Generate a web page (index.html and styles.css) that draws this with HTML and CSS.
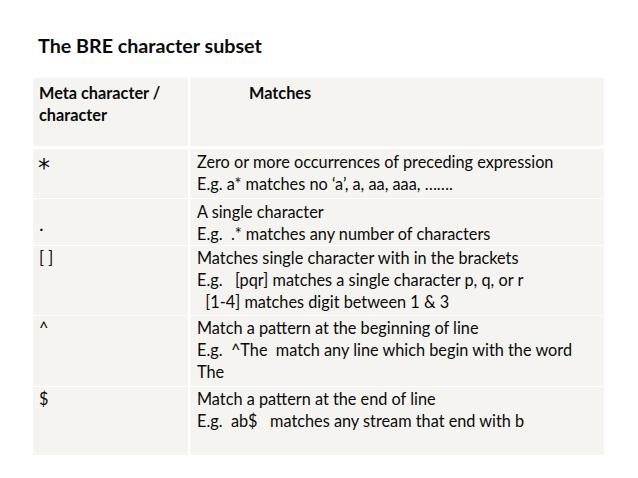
FILE: index.html
```html
<!DOCTYPE html>
<html>
<head>
<meta charset="utf-8">
<link rel="stylesheet" href="styles.css">
</head>
<body>
<div class="slide">
  <h1 class="title">The BRE character subset</h1>
  <div class="table">
    <div class="row head">
      <div class="cell c1">Meta character /<br>character</div>
      <div class="cell c2 head-matches">Matches</div>
    </div>
    <div class="row r1">
      <div class="cell c1 meta star">*</div>
      <div class="cell c2">Zero or more occurrences of preceding expression
E.g. a* matches no ‘a’, a, aa, aaa, …….</div>
    </div>
    <div class="row r2">
      <div class="cell c1 meta big mid">.</div>
      <div class="cell c2">A single character
E.g.  .* matches any number of characters</div>
    </div>
    <div class="row r3">
      <div class="cell c1 meta">[ ]</div>
      <div class="cell c2">Matches single character with in the brackets
E.g.   [pqr] matches a single character p, q, or r
  [1-4] matches digit between 1 &amp; 3</div>
    </div>
    <div class="row r4">
      <div class="cell c1 meta">^</div>
      <div class="cell c2">Match a pattern at the beginning of line
E.g.  ^The  match any line which begin with the word
The</div>
    </div>
    <div class="row r5">
      <div class="cell c1 meta">$</div>
      <div class="cell c2">Match a pattern at the end of line
E.g.  ab$   matches any stream that end with b</div>
    </div>
  </div>
</div>
</body>
</html>
```
FILE: styles.css
```css
html, body {
  margin: 0;
  padding: 0;
  background: #ffffff;
}
.slide {
  width: 638px;
  height: 478px;
  padding: 33px 0 0 33px;
  box-sizing: border-box;
  font-family: Lato, "Open Sans", sans-serif;
  color: #0a0a0a;
}
.title {
  margin: 0 0 0 5px;
  font-size: 19.7px;
  line-height: 26px;
  font-weight: 700;
  height: 45px;
}
.table {
  width: 571px;
  display: flex;
  flex-direction: column;
  gap: 1px;
}
.row {
  display: grid;
  grid-template-columns: 155px 1fr;
  column-gap: 2px;
}
.cell {
  background: #f5f4f0;
  font-size: 16.3px;
  line-height: 22px;
  white-space: pre-wrap;
}
.c1 { padding: 2px 0 0 6px; }
.c2 { padding: 2px 0 0 7px; }
.head { height: 68px; margin-bottom: 2px; }
.head .cell { font-weight: 700; padding-top: 4px; }
.head .head-matches { padding-left: 59px; }
.r1 { height: 49px; }
.r2 { height: 46px; }
.r3 { height: 69px; }
.r4 { height: 70px; }
.r5 { height: 68px; }
.r3 .cell, .r4 .cell, .r5 .cell { padding-top: 1px; }
.star { font-family: "DejaVu Sans", sans-serif; font-size: 24px; line-height: 30px; padding-top: 4px; padding-left: 5px; }
.big { font-size: 20px; }
.mid { display: flex; align-items: center; }
```
